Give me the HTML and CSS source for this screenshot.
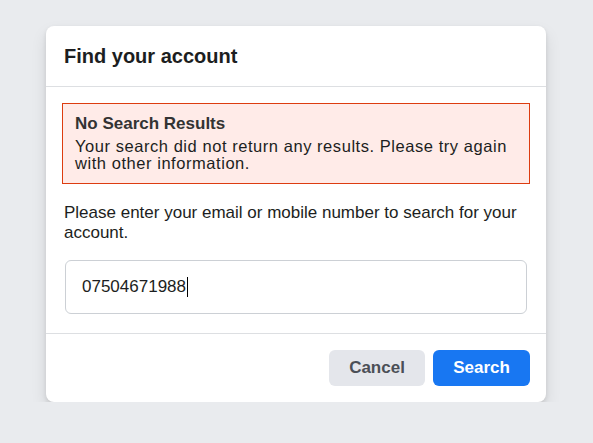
FILE: index.html
```html
<!DOCTYPE html>
<html lang="en">
<head>
<meta charset="utf-8">
<title>Find your account</title>
<link rel="stylesheet" href="styles.css">
</head>
<body>
<div class="card">
  <div class="card-header">
    <h2 class="title">Find your account</h2>
  </div>
  <div class="card-body">
    <div class="error-box">
      <div class="error-title">No Search Results</div>
      <div class="error-text">Your search did not return any results. Please try again with other information.</div>
    </div>
    <p class="hint">Please enter your email or mobile number to search for your account.</p>
    <div class="field"><span class="field-value">07504671988</span><span class="caret"></span></div>
  </div>
  <div class="card-footer">
    <button class="btn btn-cancel">Cancel</button>
    <button class="btn btn-search">Search</button>
  </div>
</div>
</body>
</html>
```

FILE: styles.css
```css
* { box-sizing: border-box; }
html, body { margin: 0; padding: 0; }
body {
  background: #e9ebee;
  font-family: "Liberation Sans", Arial, sans-serif;
  color: #1c1e21;
  padding: 26px 1px 0 0;
}
.card {
  width: 500px;
  margin: 0 auto;
  background: #fff;
  border-radius: 8px;
  box-shadow: 0 2px 4px rgba(0,0,0,.1), 0 8px 16px rgba(0,0,0,.1);
}
.card-header {
  height: 61px;
  padding: 0 18px;
  display: flex;
  align-items: center;
  border-bottom: 1px solid #dddfe2;
}
.title {
  margin: 0;
  font-size: 20px;
  font-weight: bold;
  color: #1c1e21;
  line-height: 24px;
}
.card-body {
  padding: 16px 16px 19px;
}
.error-box {
  background: #ffebe8;
  border: 1px solid #dd3c10;
  padding: 10px 12px 11px;
}
.error-title {
  font-size: 17px;
  font-weight: bold;
  line-height: 20px;
  color: #333;
  margin-bottom: 4px;
}
.error-text {
  font-size: 16.5px;
  letter-spacing: 0.55px;
  line-height: 17px;
  color: #1c1e21;
}
.hint {
  margin: 19px 0 17px 2px;
  font-size: 17px;
  line-height: 20px;
  color: #1c1e21;
}
.field {
  margin: 0 3px;
  height: 54px;
  border: 1px solid #ccd0d5;
  border-radius: 6px;
  padding: 0 16px;
  display: flex;
  align-items: center;
  font-size: 17px;
  color: #1c1e21;
}
.caret {
  display: inline-block;
  width: 1px;
  height: 20px;
  background: #000;
  margin-left: 1px;
}
.card-footer {
  border-top: 1px solid #dddfe2;
  padding: 16px;
  display: flex;
  justify-content: flex-end;
  gap: 8px;
}
.btn {
  height: 36px;
  border: none;
  border-radius: 6px;
  font-family: "Liberation Sans", Arial, sans-serif;
  font-size: 17px;
  font-weight: bold;
  padding: 0 20px;
  cursor: pointer;
}
.btn-cancel {
  width: 96px;
  background: #e4e6eb;
  color: #4b4f56;
}
.btn-search {
  width: 97px;
  background: #1877f2;
  color: #fff;
}
```
